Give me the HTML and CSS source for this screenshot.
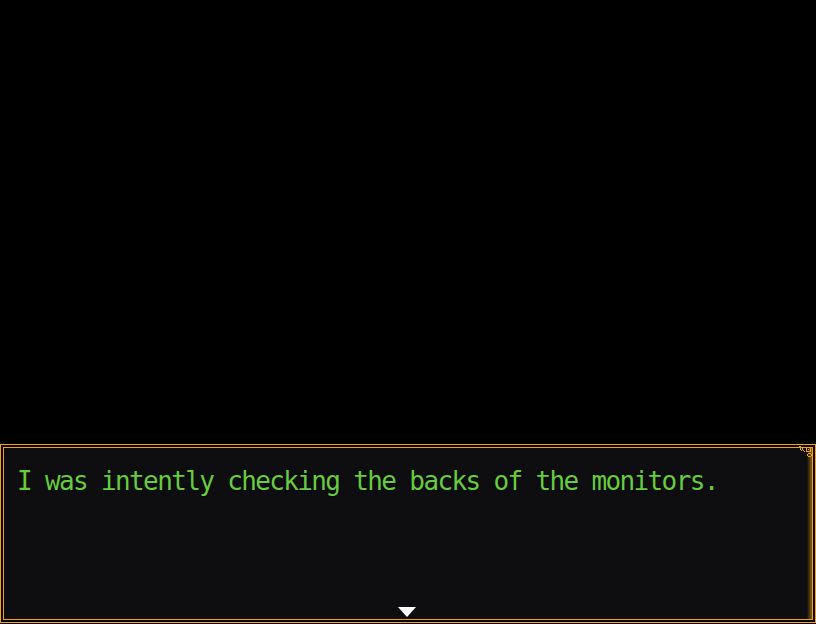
FILE: index.html
```html
<!DOCTYPE html>
<html lang="en">
<head>
<meta charset="utf-8">
<title>Message</title>
<link rel="stylesheet" href="styles.css">
</head>
<body>
<div class="screen">
  <div class="stage"></div>
  <div class="window">
    <div class="window-inner">
      <p class="message">I was intently checking the backs of the monitors.</p>
      <span class="pause-arrow"></span>
      <svg class="corner" width="16" height="14" viewBox="0 0 16 14" shape-rendering="crispEdges">
        <g fill="#f8a20c">
          <rect x="0" y="0" width="2" height="1"/>
          <rect x="2" y="1" width="1" height="1"/>
          <rect x="3" y="2" width="1" height="2"/>
          <rect x="1" y="2" width="1" height="2"/>
          <rect x="2" y="4" width="1" height="1"/>
          <rect x="4" y="4" width="1" height="1"/>
          <rect x="5" y="5" width="1" height="1"/>
          <rect x="7" y="1" width="5" height="1"/>
          <rect x="7" y="5" width="5" height="1"/>
          <rect x="7" y="1" width="1" height="5"/>
          <rect x="11" y="1" width="1" height="5"/>
          <rect x="9" y="3" width="1" height="1"/>
          <rect x="9" y="7" width="3" height="1"/>
          <rect x="8" y="8" width="1" height="2"/>
          <rect x="12" y="8" width="1" height="2"/>
          <rect x="9" y="10" width="3" height="1"/>
        </g>
      </svg>
    </div>
  </div>
</div>
</body>
</html>
```
FILE: styles.css
```css
html, body {
  margin: 0;
  padding: 0;
  background: #000;
}
.screen {
  width: 816px;
  height: 624px;
  display: flex;
  flex-direction: column;
  overflow: hidden;
}
.stage {
  flex: 1;
  background: #000;
}
.window {
  height: 179px;
  margin-bottom: 1px;
  box-sizing: border-box;
  border: 1px solid #f8a20c;
  padding: 2px;
  background: #050506;
}
.window-inner {
  position: relative;
  height: 100%;
  box-sizing: border-box;
  border: 1px solid #f8a20c;
  background:
    linear-gradient(to right, rgba(248,162,12,0) 0, rgba(248,162,12,0.55) 100%) right top / 5px 100% no-repeat,
    #0e0e11;
  padding: 15px 0 0 13px;
}
.message {
  margin: 0;
  font-family: "DejaVu Sans Mono", monospace;
  font-size: 26px;
  letter-spacing: -1.64px;
  line-height: 36px;
  color: #66cc40;
  text-shadow: 0 0 2px rgba(0,0,0,0.7);
  white-space: pre;
}
.pause-arrow {
  position: absolute;
  left: 394px;
  bottom: 2px;
  width: 0;
  height: 0;
  border-left: 9px solid transparent;
  border-right: 9px solid transparent;
  border-top: 10px solid #fff;
}
.corner {
  position: absolute;
  right: -3px;
  top: -2px;
}
```
